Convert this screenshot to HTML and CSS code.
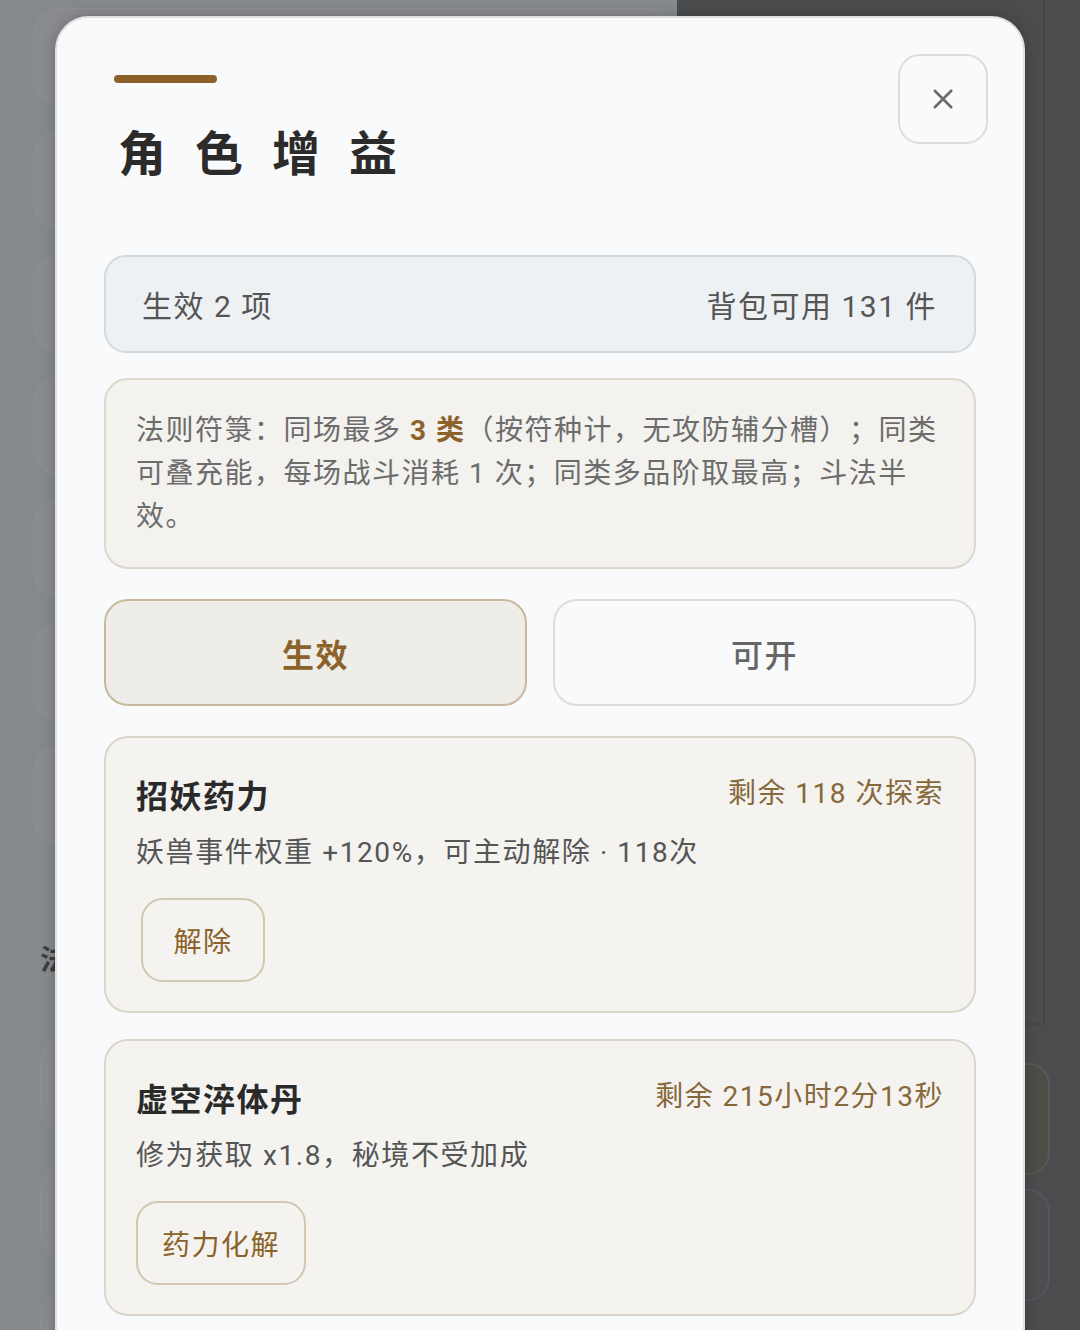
FILE: index.html
```html
<!DOCTYPE html>
<html lang="zh-CN">
<head>
<meta charset="utf-8">
<title>角色增益</title>
<link rel="stylesheet" href="styles.css">
</head>
<body>
<div class="page">
  <div class="page-left">
    <div class="ghost-list">
      <div class="ghost-card"></div>
      <div class="ghost-card"></div>
      <div class="ghost-card"></div>
      <div class="ghost-card"></div>
      <div class="ghost-card"></div>
      <div class="ghost-card"></div>
      <div class="ghost-card"></div>
    </div>
    <div class="ghost-heading">法则符箓</div>
    <div class="ghost-list lower">
      <div class="ghost-card"></div>
      <div class="ghost-card"></div>
      <div class="ghost-card"></div>
    </div>
  </div>
  <div class="page-right">
    <div class="dark-panel"></div>
    <div class="dark-actions">
      <div class="dark-btn warm"></div>
      <div class="dark-btn"></div>
    </div>
  </div>
</div>

<div class="overlay">
  <div class="modal">
    <div class="modal-header">
      <div class="heading">
        <div class="accent-bar"></div>
        <h1 class="title">角色增益</h1>
      </div>
      <button class="close-btn" aria-label="关闭">
        <svg width="24" height="24" viewBox="0 0 24 24"><path d="M3 3 L21 21 M21 3 L3 21" stroke="#6b6b6b" stroke-width="2.8" stroke-linecap="round" fill="none"/></svg>
      </button>
    </div>

    <div class="summary">
      <span>生效 2 项</span>
      <span>背包可用 131 件</span>
    </div>

    <div class="rules">法则符箓：同场最多 <b class="hl">3 类</b>（按符种计，无攻防辅分槽）；同类可叠充能，每场战斗消耗 1 次；同类多品阶取最高；斗法半效。</div>

    <div class="tabs">
      <button class="tab active">生效</button>
      <button class="tab">可开</button>
    </div>

    <div class="buff-list">
      <div class="buff-card">
        <div class="buff-top">
          <span class="buff-name">招妖药力</span>
          <span class="buff-meta">剩余 118 次探索</span>
        </div>
        <div class="buff-desc">妖兽事件权重 +120%，可主动解除 · 118次</div>
        <button class="buff-btn inset">解除</button>
      </div>
      <div class="buff-card">
        <div class="buff-top">
          <span class="buff-name">虚空淬体丹</span>
          <span class="buff-meta">剩余 215小时2分13秒</span>
        </div>
        <div class="buff-desc">修为获取 x1.8，秘境不受加成</div>
        <button class="buff-btn">药力化解</button>
      </div>
    </div>
  </div>
</div>
</body>
</html>
```

FILE: styles.css
```css
* { box-sizing: border-box; }

html, body {
  margin: 0;
  padding: 0;
  width: 1080px;
  height: 1330px;
  overflow: hidden;
}

body {
  font-family: Roboto, "Noto Sans CJK SC", "Noto Sans", sans-serif;
  background: #86898c;
  position: relative;
  text-spacing-trim: space-all;
}

/* ---------- dimmed page underneath ---------- */
.page {
  display: grid;
  grid-template-columns: 677px 1fr;
  height: 1330px;
}

.page-left {
  padding: 8px 0 0 33px;
  display: flex;
  flex-direction: column;
}

.ghost-list {
  display: flex;
  flex-direction: column;
  gap: 25px;
}

.ghost-list.lower {
  padding-left: 7px;
  gap: 29px;
}

.ghost-card {
  height: 98px;
  border-radius: 26px;
  background: #898b8e;
  border: 1px solid #8e9093;
}

.ghost-heading {
  margin: 94px 0 58px 7px;
  font-size: 28px;
  font-weight: 700;
  color: #3b3d40;
  letter-spacing: 2px;
}

.page-right {
  background: #4a4c4e;
  display: flex;
  flex-direction: column;
}

.dark-panel {
  height: 1025px;
  margin-right: 35px;
  border-right: 2px solid #434547;
  border-bottom: 2px solid #444648;
}

.dark-actions {
  display: flex;
  flex-direction: column;
  gap: 14px;
  padding: 38px 30px 0 0;
  align-items: flex-end;
}

.dark-btn {
  width: 120px;
  height: 112px;
  border-radius: 22px;
  border: 2px solid #55575a;
  background: #4c4e50;
}

.dark-btn.warm {
  background: #4e4c48;
  border-color: #5c5953;
}

/* ---------- modal ---------- */
.overlay {
  position: absolute;
  inset: 0;
  overflow: hidden;
}

.modal {
  width: 970px;
  height: 1400px;
  margin: 16px 0 0 55px;
  background: #f9fafb;
  border: 2px solid #dfe1e3;
  border-radius: 34px;
  padding: 36px 47px 0;
  box-shadow: 0 0 14px rgba(0, 0, 0, 0.22);
  letter-spacing: 1.5px;
}

.modal-header {
  display: flex;
  justify-content: space-between;
  align-items: flex-start;
  margin-bottom: 72px;
}

.accent-bar {
  width: 103px;
  height: 8px;
  border-radius: 4px;
  background: #8b6229;
  margin: 21px 0 0 10px;
}

.title {
  margin: 44px 0 0 14px;
  font-size: 48px;
  line-height: 56px;
  font-weight: 700;
  letter-spacing: 29px;
  color: #2b2b2b;
}

.close-btn {
  width: 90px;
  height: 90px;
  margin-right: -12px;
  border: 2px solid #dcdddf;
  border-radius: 22px;
  background: #f9fafb;
  display: flex;
  align-items: center;
  justify-content: center;
  padding: 0;
}

.close-btn svg { width: 22px; height: 22px; }

.summary {
  height: 98px;
  display: flex;
  justify-content: space-between;
  align-items: center;
  padding: 0 37px 0 36px;
  background: #eef1f3;
  border: 2px solid #d6d9dc;
  border-radius: 22px;
  font-size: 30px;
  color: #555;
}

.rules {
  margin-top: 25px;
  padding: 29px 31px 29px 30px;
  background: #f3f2ee;
  border: 2px solid #ddd7cc;
  border-radius: 24px;
  font-size: 28px;
  line-height: 43px;
  color: #6c6c6c;
}

.rules .hl {
  color: #8b6229;
  font-weight: 700;
}

.tabs {
  margin-top: 30px;
  display: grid;
  grid-template-columns: 1fr 1fr;
  gap: 26px;
}

.tab {
  height: 107px;
  border-radius: 24px;
  border: 2px solid #dcdddf;
  background: #f9fafb;
  font-family: inherit;
  font-size: 32px;
  font-weight: 500;
  letter-spacing: 1.5px;
  color: #666;
}

.tab.active {
  background: #efede8;
  border-color: #c9b99c;
  color: #8b6229;
  font-weight: 700;
}

.buff-list {
  margin-top: 30px;
  display: flex;
  flex-direction: column;
  gap: 26px;
}

.buff-card {
  padding: 34px 30px 29px;
  background: #f4f3f0;
  border: 2px solid #dbd5ca;
  border-radius: 24px;
  display: flex;
  flex-direction: column;
  align-items: flex-start;
}

.buff-top {
  align-self: stretch;
  display: flex;
  justify-content: space-between;
  align-items: center;
  height: 44px;
}

.buff-name {
  font-size: 32px;
  font-weight: 700;
  color: #2a2a2a;
}

.buff-meta {
  font-size: 28px;
  color: #86683a;
  margin-top: -6px;
}

.buff-desc {
  margin-top: 17px;
  font-size: 28px;
  line-height: 40px;
  letter-spacing: 1.6px;
  color: #555;
}

.buff-btn {
  margin-top: 25px;
  height: 84px;
  min-width: 124px;
  padding: 0 24px;
  border: 2px solid #d3c7b2;
  border-radius: 22px;
  background: transparent;
  font-family: inherit;
  font-size: 28px;
  letter-spacing: 1.5px;
  color: #8b6229;
}

.buff-btn.inset { margin-left: 5px; }
```
